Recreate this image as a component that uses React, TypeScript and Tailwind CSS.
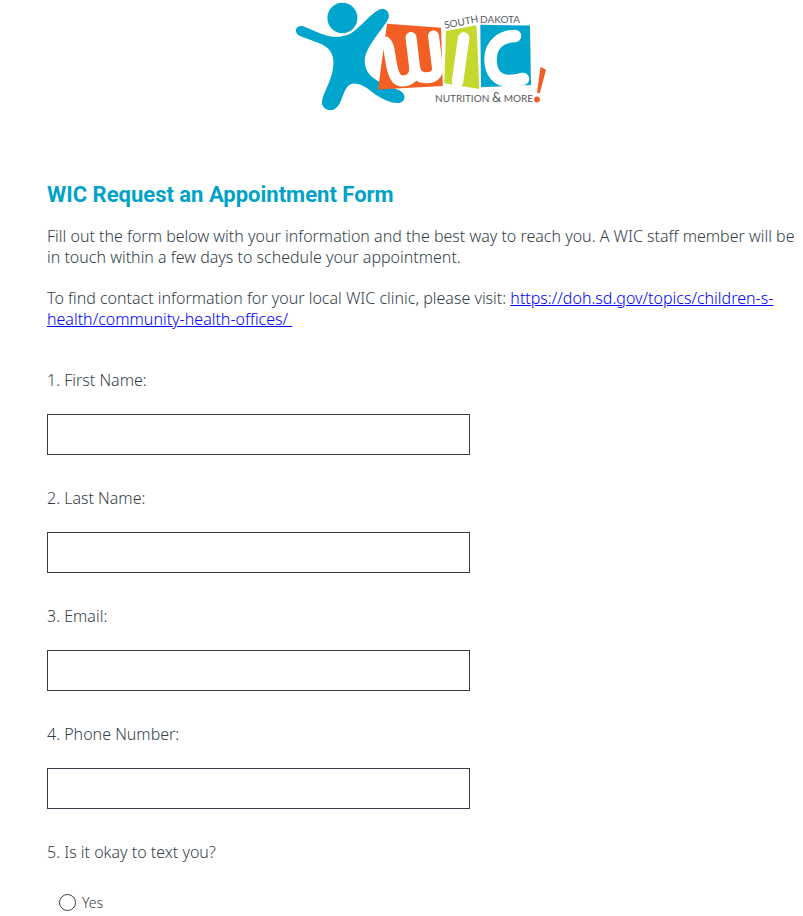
const questions = [
  { id: "firstName", label: "1. First Name:", type: "text" },
  { id: "lastName", label: "2. Last Name:", type: "text" },
  { id: "email", label: "3. Email:", type: "email" },
  { id: "phone", label: "4. Phone Number:", type: "tel" },
];

function WicLogo() {
  return (
    <svg
      viewBox="0 0 260 112"
      className="h-28 w-[260px]"
      role="img"
      aria-label="South Dakota WIC, Nutrition & More!"
    >
      {/* figure */}
      <g fill="#00a5cd">
        <ellipse cx="52.4" cy="18" rx="15" ry="15.2" />
        <path d="M13 26.3C21 29 31 35 41 36.4C49 37.6 58 36 63.5 31.5C71 26 80 15 87.5 10.5C93 7.2 99 10 99 16C98.5 24 76 44 74.7 60C74.5 72 82 78 90 82C97 86 105 88 110.5 91C116 94 116.5 103 107.5 103C99 103 90 98 82 92C76 87 70 83.5 64 83.5C58 84 56 88 53.5 94C51 100 49.5 107 44 109.5C38 111.5 31 108 32 101C33 92 43.5 79 43.5 62C43 50 36 46 27.5 42.5C20 39.5 14 38 9 35.5C3 31.5 6.5 24.5 13 26.3Z" />
      </g>
      {/* W */}
      <path d="M97 23.7L151 27.7L152.8 86L88 89.5Z" fill="#f15f24" />
      <g fill="none" stroke="#fff" strokeWidth="11" strokeLinecap="round">
        <path d="M95.5 42C100 46 99 54 102 67C104 77 108 81.5 113 81C120 80.5 125.5 76 124.7 68L121 37.5" />
        <path d="M124.7 68C126 75 130 78 137 77.8C143.5 77.5 148 74 147.5 68L143.5 36" />
      </g>
      {/* I */}
      <path d="M156 31L186.5 25.3L189.3 89L154.3 83.3Z" fill="#c4d82d" />
      <path d="M173.6 38L167.5 82" stroke="#fff" strokeWidth="11.5" strokeLinecap="round" />
      {/* C */}
      <path d="M190.3 24.7L240 25.5L241 85L191 87.3Z" fill="#00a5cd" />
      <path
        d="M225 36C211 36 200.5 45 200.5 59C200.5 73 208 81 219 81C225 81 229 79.5 233 79"
        fill="none"
        stroke="#fff"
        strokeWidth="12.5"
        strokeLinecap="round"
      />
      {/* exclamation mark */}
      <g fill="#f15f24">
        <path d="M250.6 66.7L256 69.7L249.8 93.3L247 92.7Z" />
        <circle cx="247" cy="99.5" r="2.9" />
      </g>
      <g fill="#58595b" fontFamily="Lato, sans-serif" fontSize="10" fontWeight="400">
        <text x="155" y="28.7" transform="rotate(-11 155 28.7)">
          SOUTH
        </text>
        <text x="190" y="23">
          DAKOTA
        </text>
        <text x="145" y="101.5">
          NUTRITION <tspan fontSize="13">&amp;</tspan> MORE
        </text>
      </g>
    </svg>
  );
}

export default function App() {
  return (
    <main className="bg-white pr-2 pl-[47px] font-['Noto_Sans',sans-serif] text-base leading-[21px] font-light text-[#333e48]">
      <header className="flex justify-center pr-0.5">
        <WicLogo />
      </header>

      <h1 className="mt-[69px] font-['Roboto',sans-serif] text-[22px] leading-7 font-bold text-[#00a2c8]">
        WIC Request an Appointment Form
      </h1>
      <p className="mt-[17px]">
        Fill out the form below with your information and the best way to reach
        you. A WIC staff member will be in touch within a few days to schedule
        your appointment.
      </p>
      <p className="mt-5">
        To find contact information for your local WIC clinic, please visit:{" "}
        <a
          href="https://doh.sd.gov/topics/children-s-health/community-health-offices/"
          className="text-[#0000ff] underline"
        >
          https://doh.sd.gov/topics/children-s-health/community-health-offices/&nbsp;
        </a>
      </p>

      <form className="mt-10 flex flex-col gap-[33px]">
        {questions.map((q) => (
          <div key={q.id}>
            <label htmlFor={q.id} className="block">
              {q.label}
            </label>
            <input
              id={q.id}
              name={q.id}
              type={q.type}
              className="mt-[23px] block h-[41px] w-full max-w-[423px] border border-[#333e48] bg-white px-2"
            />
          </div>
        ))}

        <fieldset>
          <legend>5. Is it okay to text you?</legend>
          <label className="mt-[29px] ml-3 flex items-center gap-1.5 text-sm leading-[21px]">
            <input
              type="radio"
              name="okayToText"
              value="yes"
              className="size-[17px] appearance-none rounded-full border border-[#333e48] bg-white checked:border-4"
            />
            Yes
          </label>
        </fieldset>
      </form>
    </main>
  );
}
